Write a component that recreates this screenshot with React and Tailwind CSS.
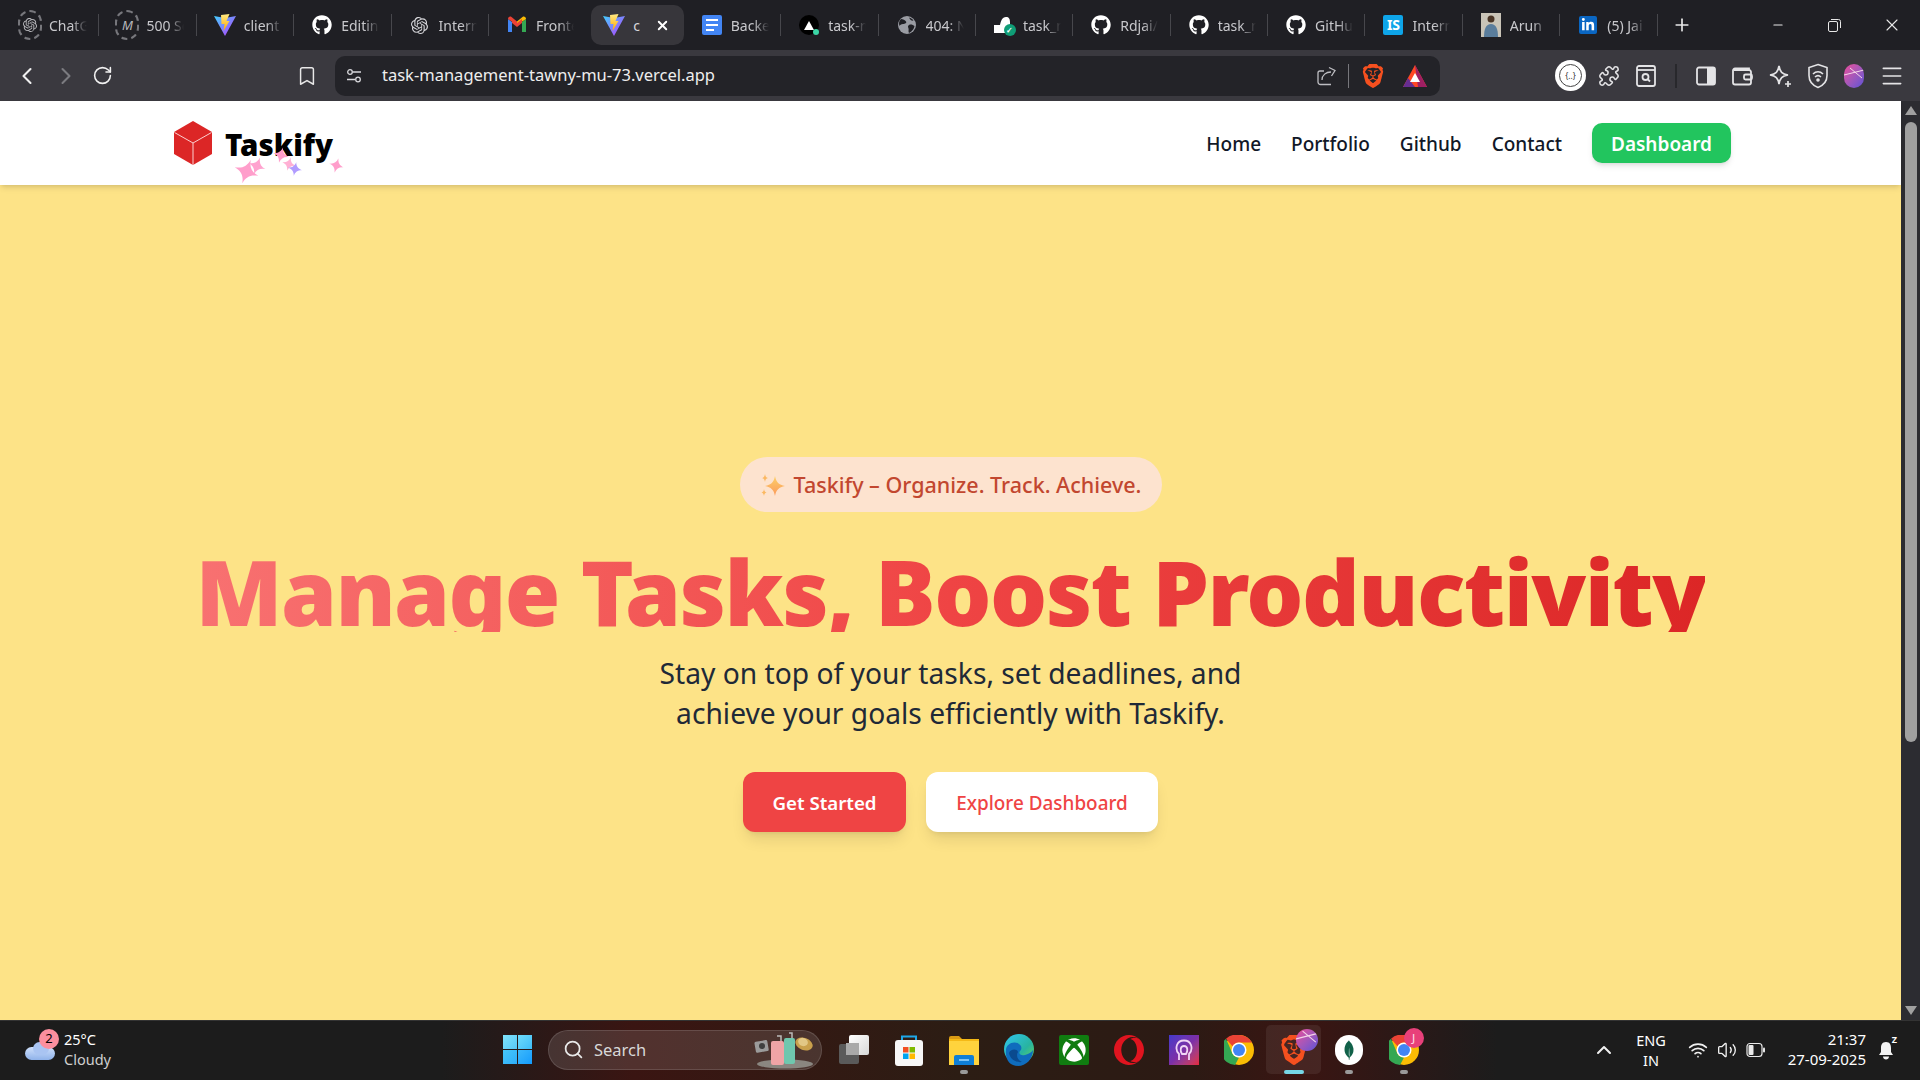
import React from "react";
import { FaGithub, FaLinkedinIn, FaXbox } from "react-icons/fa";
import { SiOpenai, SiBrave, SiMongodb, SiOpera } from "react-icons/si";
import { ChevronLeft, ChevronRight, RotateCw, Bookmark, Plus, X, Minus, Search, Puzzle, Wifi, Volume2, ChevronUp, Menu } from "lucide-react";

const Vite = ({ s = 24 }) => (
  <svg width={s} height={s} viewBox="0 0 24 24">
    <defs>
      <linearGradient id="vg" x1="0" y1="0" x2="1" y2="1"><stop offset="0" stopColor="#41d1ff" /><stop offset="1" stopColor="#bd34fe" /></linearGradient>
      <linearGradient id="vb" x1="0" y1="0" x2="0" y2="1"><stop offset="0" stopColor="#ffea83" /><stop offset="1" stopColor="#ffa800" /></linearGradient>
    </defs>
    <path d="M1 3 L12 5 L23 3 L12 23 Z" fill="url(#vg)" />
    <path d="M8 2 L16.5 1 L13.5 8 L16.5 8 L10.5 18 L11.5 11 L8.5 11 Z" fill="url(#vb)" />
  </svg>
);
const Gmail = () => (
  <svg width="20" height="18" viewBox="0 0 20 18">
    <path d="M1 16V3l4 3v10z" fill="#4285f4" /><path d="M19 16V3l-4 3v10z" fill="#34a853" />
    <path d="M1 3c0-2 2-3 3.500-2L10 5.500V9L1 3z" fill="#ea4335" /><path d="M19 3c0-2-2-3-3.500-2L10 5.500V9l9-6z" fill="#fbbc04" />
    <path d="M5 3l5 4 5-4v4l-5 4-5-4z" fill="#ea4335" />
  </svg>
);
const Docs = () => (
  <div className="flex h-5 w-5 flex-col justify-center gap-[3px] rounded-[2px] bg-[#4285f4] px-1">
    <div className="h-[2px] w-full bg-white" /><div className="h-[2px] w-full bg-white" /><div className="h-[2px] w-2/3 bg-white" />
  </div>
);
const VercelDot = () => (
  <div className="relative flex h-5 w-5 items-center justify-center rounded-full bg-black">
    <svg width="10" height="9" viewBox="0 0 10 9"><path d="M5 0l5 9H0z" fill="#fff" /></svg>
    <div className="absolute bottom-0 right-0 h-[6px] w-[6px] rounded-full bg-[#3bd6a5]" />
  </div>
);
const Render = () => (
  <div className="relative h-5 w-5">
    <svg width="20" height="20" viewBox="0 0 20 20"><path d="M0 10h6c1-4 2-8 6-8 3 0 4 2 4 5v11H0z" fill="#fff" /></svg>
    <div className="absolute -bottom-[1px] -right-[2px] flex h-3 w-3 items-center justify-center rounded-full bg-[#0f9d76] text-[8px] font-bold leading-none text-white">✓</div>
  </div>
);
const IS = () => <div className="flex h-5 w-5 items-center justify-center rounded-[2px] bg-[#0ea5e9] text-[14px] font-bold leading-none text-white">IS</div>;
const Arun = () => (
  <svg width="20" height="24" viewBox="0 0 20 24"><rect width="20" height="24" fill="#c9c4b8" /><circle cx="10" cy="6" r="3.500" fill="#4a3526" /><path d="M3 24c0-8 2-13 7-13s7 5 7 13z" fill="#5a7d9c" /></svg>
);
const Orbit = ({ children }) => (
  <div className="flex h-[30px] w-[24px] items-center justify-center rounded-full border-2 border-dashed border-[#77777c] text-[#b8b8bc]">{children}</div>
);
const GlobeSolid = () => (
  <svg width="18" height="18" viewBox="0 0 18 18">
    <circle cx="9" cy="9" r="9" fill="#9a9ca3" />
    <path d="M3 3c2 0 4 1 5 2.500S7 8 5 8 2 9 1.500 10C.5 7 1 5 3 3zM11 9c2-1 4 0 5.500 1-.5 3-2.500 5.500-5.500 7-1-2 0-3-.5-4.500S9.500 10 11 9zM11 1.500c2 .5 3.500 1.500 4.500 3-1.500.5-3 0-4.500-3z" fill="#1f1f24" />
  </svg>
);
const LinkedIn = () => <div className="flex h-[18px] w-[18px] items-center justify-center rounded-[2px] bg-[#0a66c2]"><FaLinkedinIn size={14} color="#fff" /></div>;

const tabs = [
  { icon: <Orbit><SiOpenai size={14} /></Orbit>, t: "ChatGPT" },
  { icon: <Orbit><span className="text-[13px] italic leading-none">M</span></Orbit>, t: "500 Server" },
  { icon: <Vite />, t: "client" },
  { icon: <FaGithub size={20} color="#fff" />, t: "Editing" },
  { icon: <SiOpenai size={17} color="#d8d8dc" />, t: "Internship" },
  { icon: <Gmail />, t: "Frontend" },
  { icon: <Vite />, t: "c", active: true },
  { icon: <Docs />, t: "Backend" },
  { icon: <VercelDot />, t: "task-m" },
  { icon: <GlobeSolid />, t: "404: Not" },
  { icon: <Render />, t: "task_m" },
  { icon: <FaGithub size={20} color="#fff" />, t: "Rdjai/" },
  { icon: <FaGithub size={20} color="#fff" />, t: "task_m" },
  { icon: <FaGithub size={20} color="#fff" />, t: "GitHub" },
  { icon: <IS />, t: "Intern" },
  { icon: <Arun />, t: "Arun" },
  { icon: <LinkedIn />, t: "(5) Jai" },
];

const Tab = ({ icon, t, active }) =>
  active ? (
    <div className="ml-[5px] flex h-10 w-[92.400px] shrink-0 items-center gap-[7px] rounded-[10px] bg-[#37363b] pl-[11px]">
      <div className="flex w-6 shrink-0 items-center justify-center">{icon}</div>
      <span className="w-[8px] overflow-hidden text-[14px] text-[#d8d8dc]">{t}</span>
      <X size={15} strokeWidth={3} color="#fff" className="ml-[7px]" />
    </div>
  ) : (
    <div className="flex h-10 w-[97.400px] shrink-0 items-center gap-[7px] pl-4">
      <div className="flex w-6 shrink-0 items-center justify-center">{icon}</div>
      <span className="w-[38px] overflow-hidden whitespace-nowrap text-[14px] text-[#c8c8cc] [mask-image:linear-gradient(to_right,black_60%,transparent)]">{t}</span>
    </div>
  );

const Sep = () => <div className="h-[22px] w-px shrink-0 bg-[#47474c]" />;

const Restore = () => (
  <svg width="13" height="14" viewBox="0 0 13 14" fill="none" stroke="#e8e8e8"><rect x="0.500" y="3.500" width="9" height="10" rx="1.500" /><path d="M3 1.500h7.500a2 2 0 0 1 2 2V10" /></svg>
);

const BAT = () => (
  <svg width="24" height="22" viewBox="0 0 24 22"><path d="M12 0L24 22H0z" fill="#ff4724" /><path d="M12 0L24 22H15z" fill="#9e1f63" /><path d="M0 22L5 13 12 22z" fill="#662d91" /><path d="M12 8l5 9H7z" fill="#fff" /></svg>
);
const BraveIcon = ({ s = 24 }) => <SiBrave size={s} color="#f5501f" />;

const tool = "#e4e4e6";
const SiteSettings = () => (
  <svg width="16" height="16" viewBox="0 0 16 16" fill="none" stroke="#d8d8dc" strokeWidth="1.300"><circle cx="4" cy="4" r="2.300" /><path d="M6.500 4H15M1 11.500h8" /><circle cx="12" cy="11.500" r="2.300" /></svg>
);
const ShareUp = () => (
  <svg width="20" height="20" viewBox="0 0 20 20" fill="none" stroke="#bdbdc2" strokeWidth="1.300"><path d="M7 5H3a2 2 0 0 0-2 2v9a2.500 2.500 0 0 0 2.500 2.500H14" /><path d="M5 14c0-5 4-8 9-8M12 1.500l6 3-3.500 5.500" /></svg>
);
const SidePanel = () => <svg width="22" height="22" viewBox="0 0 22 22" fill="none"><rect x="2" y="2.500" width="18" height="17" rx="2" stroke={tool} strokeWidth="1.800" /><rect x="12" y="2.500" width="8" height="17" fill={tool} /></svg>;
const Wallet = () => <svg width="22" height="22" viewBox="0 0 22 22" fill="none" stroke={tool} strokeWidth="1.800"><path d="M18 5V3.500H4A2 2 0 0 0 2 5.500v12a2 2 0 0 0 2 2h14a2 2 0 0 0 2-2V7a2 2 0 0 0-2-2H3" /><rect x="13" y="9.500" width="8" height="5" rx="1.500" /></svg>;
const Leo = () => <svg width="24" height="24" viewBox="0 0 24 24" fill="none" stroke={tool} strokeWidth="1.700"><path d="M11 2c1 6 3 8 9 9-6 1-8 3-9 9-1-6-3-8-9-9 6-1 8-3 9-9z" /><path d="M20 17v6M17 20h6" /></svg>;
const VpnShield = () => <svg width="22" height="26" viewBox="0 0 22 26" fill="none" stroke={tool} strokeWidth="1.600"><path d="M11 1.500l9 3v8c0 6-4 10-9 12-5-2-9-6-9-12v-8z" /><path d="M6 11c3-3 7-3 10 0M8 14c2-1.800 4-1.800 6 0" /><circle cx="11" cy="17" r="1" fill={tool} /></svg>;
const ReadBox = () => <svg width="22" height="24" viewBox="0 0 22 24" fill="none" stroke={tool} strokeWidth="1.800"><rect x="2" y="2" width="18" height="20" rx="2" /><path d="M2 6h18" /><circle cx="10.500" cy="13" r="3" /><path d="M13 15.500l2 2" /></svg>;
const Avatar = ({ s = 20, w = 20 }) => (
  <div className="relative overflow-hidden rounded-full bg-gradient-to-br from-[#ec4899] to-[#5b4fd6]" style={{ height: s, width: w }}>
    <svg className="absolute inset-0" width={w} height={s} viewBox="0 0 20 20" stroke="#f5d5e8" strokeWidth="1"><path d="M0 9l20-5M6 2l12 10" /></svg>
  </div>
);

const Spark = ({ s, c, className }) => (
  <svg width={s} height={s} viewBox="0 0 20 20" className={className}><path d="M10 0c1 6 4 9 10 10-6 1-9 4-10 10-1-6-4-9-10-10 6-1 9-4 10-10z" fill={c} /></svg>
);

const Logo = () => (
  <div className="relative flex items-center">
    <svg width="38" height="44" viewBox="0 0 38 44">
      <path d="M19 0L38 11V33L19 44L0 33V11Z" fill="#dc2626" />
      <path d="M0.500 11.500L19 22L37.500 11.500M19 22V44" fill="none" stroke="#fbd0d0" strokeWidth="1" />
    </svg>
    <span className="ml-[13px] pt-[3px] text-[29.500px] font-black leading-none text-black">Taskify</span>
    <Spark s={25} c="#ff9ecb" className="absolute left-[60px] top-[38px] rotate-[20deg]" />
    <Spark s={18} c="#ffa3cf" className="absolute left-[74px] top-[36px] rotate-[20deg]" />
    <Spark s={16} c="#ff9ecb" className="absolute left-[99px] top-[26px] rotate-[15deg]" />
    <Spark s={14} c="#ffb0d4" className="absolute left-[108px] top-[36px] rotate-[15deg]" />
    <Spark s={14} c="#b19cff" className="absolute left-[114px] top-[41px] rotate-[10deg]" />
    <Spark s={15} c="#ff9ecb" className="absolute left-[155px] top-[37px] rotate-[15deg]" />
  </div>
);

const NavLink = ({ children }) => <a className="pt-[2px] text-[19px] font-medium text-[#111827]">{children}</a>;

const WinLogo = () => (
  <div className="grid h-[29px] w-[29px] grid-cols-2 gap-px">
    <div className="bg-gradient-to-br from-[#7fe3fb] to-[#55c8f7]" /><div className="bg-gradient-to-br from-[#6fdcfb] to-[#3dbdf8]" />
    <div className="bg-gradient-to-br from-[#46c6f9] to-[#2eaefa]" /><div className="bg-gradient-to-br from-[#3cb9fb] to-[#119bfd]" />
  </div>
);
const Luggage = () => (
  <svg width="62" height="38" viewBox="0 0 62 38">
    <ellipse cx="32" cy="33" rx="28" ry="4.500" fill="#8a8680" />
    <rect x="2" y="10" width="13" height="11" rx="1.500" fill="#9b9b9b" transform="rotate(-10 8 15)" /><circle cx="9" cy="15" r="3" fill="#3f3f3f" />
    <path d="M24 5h4V12M36 2h3V8" stroke="#bbb" fill="none" strokeWidth="1.500" />
    <rect x="18" y="10" width="13" height="24" rx="2" fill="#efa4a6" />
    <rect x="31" y="7" width="11" height="26" rx="2" fill="#6fc7ae" />
    <ellipse cx="51" cy="13" rx="9" ry="6" fill="#c9a04c" transform="rotate(20 51 13)" /><ellipse cx="50" cy="11" rx="5" ry="4" fill="#e2c785" transform="rotate(20 50 11)" />
  </svg>
);
const TaskView = () => (
  <div className="relative h-[29px] w-[30px]">
    <div className="absolute bottom-0 left-0 h-5 w-5 rounded-[2px] bg-[#5a5a5a]" />
    <div className="absolute right-0 top-0 h-5 w-5 rounded-[2px] bg-gradient-to-br from-white to-[#d8d8d8]" />
    <div className="absolute bottom-[9px] left-[7px] h-3 w-[13px] bg-[#a9a9a9]" />
  </div>
);
const Store = () => (
  <svg width="30" height="32" viewBox="0 0 30 32">
    <path d="M8 7V2.500h14V7" fill="none" stroke="#1ea7e8" strokeWidth="2" />
    <rect x="1" y="6" width="28" height="26" rx="3" fill="#f7f7f7" />
    <rect x="9" y="13" width="5.500" height="5.500" fill="#f25022" /><rect x="15.500" y="13" width="5.500" height="5.500" fill="#7fba00" />
    <rect x="9" y="19.500" width="5.500" height="5.500" fill="#00a4ef" /><rect x="15.500" y="19.500" width="5.500" height="5.500" fill="#ffb900" />
  </svg>
);
const Explorer = () => (
  <svg width="30" height="30" viewBox="0 0 30 30">
    <path d="M0 3a2 2 0 0 1 2-2h8l3 3H0z" fill="#d99a14" /><rect y="4" width="30" height="26" fill="#ffd33d" />
    <rect y="4" width="30" height="2" fill="#f5b916" />
    <path d="M5 30V22a2 2 0 0 1 2-2h16a2 2 0 0 1 2 2v8z" fill="#0f7fd6" /><rect x="10" y="24" width="10" height="2" fill="#7cc4f5" />
  </svg>
);
const Edge = () => (
  <svg width="30" height="34" viewBox="0 0 30 34">
    <defs><linearGradient id="eg" x1="0" y1="0" x2="1" y2="1"><stop offset="0" stopColor="#30c5f0" /><stop offset=".6" stopColor="#28b4a0" /><stop offset="1" stopColor="#6fdc4f" /></linearGradient></defs>
    <circle cx="15" cy="16" r="15" fill="url(#eg)" />
    <path d="M2 17c0-6 8-10 13-6 3 2 3 5 1 7-2 3 1 5 5 4 3-1 6-2 8-5 0 9-7 16-15 16S1 27 2 17z" fill="#0f6cbd" />
    <path d="M14 19c-2 3-1 8 4 10-6 1-12-3-13-9 1-4 8-5 9-1z" fill="#0a4a8f" />
  </svg>
);
const Xbox = () => <div className="flex h-[30px] w-[30px] items-center justify-center rounded-[2px] bg-[#107c10]"><FaXbox size={24} color="#fff" /></div>;
const PurpleApp = () => (
  <div className="flex h-[30px] w-[30px] items-center justify-center bg-gradient-to-br from-[#4338ca] via-[#7c2fa8] to-[#e5263a]">
    <svg width="18" height="22" viewBox="0 0 18 22" fill="none" stroke="#f0d5f5" strokeWidth="1.800"><path d="M4 21v-6c-3-3-3-6-2-9 2-6 12-6 14 0 1 3 1 6-2 9v6" /><path d="M7 15c-2-3-2-8 2-8s4 5 2 8z" /></svg>
  </div>
);
const Chrome = ({ s = 30 }) => (
  <svg width={s} height={s} viewBox="0 0 30 30">
    <circle cx="15" cy="15" r="15" fill="#fbbc04" />
    <path d="M15 0A15 15 0 0 1 28 7.500H15A7.500 7.500 0 0 0 8.500 11.250L2 3.700A15 15 0 0 1 15 0Z" fill="#ea4335" />
    <path d="M2 3.700L8.500 18.750A7.500 7.500 0 0 0 15 22.500L11 30A15 15 0 0 1 2 3.700Z" fill="#34a853" />
    <circle cx="15" cy="15" r="7.500" fill="#fff" /><circle cx="15" cy="15" r="6" fill="#4285f4" />
  </svg>
);
const Mongo = () => (
  <div className="flex h-[30px] w-[28px] items-center justify-center rounded-full bg-white"><SiMongodb size={20} color="#116149" /></div>
);

const TaskApp = ({ children, dot, active }) => (
  <div className={`relative flex h-[49px] w-[55px] items-center justify-center ${active ? "rounded-[5px] bg-[#ffffff12]" : ""}`}>
    {children}
    {dot && <div className={`absolute bottom-0 left-1/2 h-1 -translate-x-1/2 rounded-full ${active ? "w-5 bg-[#76d6e6]" : "w-2 bg-[#9a9a9a]"}`} />}
  </div>
);

const Battery = () => (
  <svg width="20" height="16" viewBox="0 0 20 16" fill="none"><rect x="1" y="1.500" width="15" height="13" rx="3" stroke="#e8e8e8" strokeWidth="1.200" /><rect x="2.500" y="3" width="5" height="10" rx="1" fill="#e8e8e8" /><rect x="17" y="5.500" width="2" height="5" rx="1" fill="#e8e8e8" /></svg>
);
const Bell = () => (
  <div className="relative">
    <svg width="18" height="20" viewBox="0 0 18 20"><path d="M9 2c4 0 5 3 5 6v4l2 3H2l2-3V8c0-3 1-6 5-6z" fill="#f2f2f2" /><path d="M6 16.500h6c0 2-1.500 3-3 3s-3-1-3-3z" fill="#f2f2f2" /></svg>
    <span className="absolute -right-[2px] -top-[5px] text-[9px] font-bold leading-none text-white">Z</span>
  </div>
);

export default function App() {
  return (
    <div className="flex h-[1080px] w-[1920px] flex-col overflow-hidden bg-[#fde387] font-['Noto_Sans','Open_Sans',sans-serif]">
      {/* tab strip */}
      <div className="flex h-[50px] shrink-0 items-center bg-[#1f1f24] pl-[2px]">
        {tabs.map((tab, i) => (
          <React.Fragment key={i}>
            <Tab {...tab} />
            {i < tabs.length - 1 && !tab.active && !tabs[i + 1].active && <div className="-ml-px"><Sep /></div>}
          </React.Fragment>
        ))}
        <div className="-ml-px"><Sep /></div>
        <Plus size={20} color="#e8e8e8" strokeWidth={2} className="ml-[14px]" />
        <div className="ml-[79px] flex items-center gap-[43px]">
          <Minus size={14} color="#e8e8e8" />
          <Restore />
          <X size={20} color="#e8e8e8" strokeWidth={1.300} className="-ml-[2px]" />
        </div>
      </div>
      {/* toolbar */}
      <div className="flex h-[51px] shrink-0 items-center bg-[#3a393f]">
        <div className="ml-[13px] flex w-[322px] items-center">
          <ChevronLeft size={28} color="#f0f0f0" strokeWidth={1.800} />
          <ChevronRight size={28} color="#7b7b80" strokeWidth={1.800} className="ml-[11px]" />
          <RotateCw size={21} color="#f0f0f0" strokeWidth={1.800} className="ml-[12px]" />
          <Bookmark size={22} color="#e8e8e8" strokeWidth={1.600} className="ml-[183px]" />
        </div>
        <div className="flex h-10 w-[1105px] items-center rounded-[10px] bg-[#232328] pl-[11px]">
          <SiteSettings />
          <span className="ml-[20px] text-[16.500px] text-[#eeeeee]">task-management-tawny-mu-73.vercel.app</span>
          <div className="ml-auto flex items-center">
            <ShareUp />
            <div className="ml-[11px] h-6 w-px bg-[#77777c]" />
            <div className="ml-[12px]"><BraveIcon /></div>
            <div className="ml-[18px] mr-[13px]"><BAT /></div>
          </div>
        </div>
        <div className="ml-[115px] flex items-center">
          <div className="flex h-[31px] w-[31px] items-center justify-center rounded-full bg-white">
            <div className="flex h-[23px] w-[23px] items-center justify-center rounded-full border border-[#444] text-[8px] leading-none text-[#333]">{"{..}"}</div>
          </div>
          <Puzzle size={22} color={tool} strokeWidth={1.700} className="ml-[12px]" />
          <div className="ml-[15px]"><ReadBox /></div>
          <div className="ml-[18px] h-6 w-[2px] bg-[#28282c]" />
          <div className="ml-[18px]"><SidePanel /></div>
          <div className="ml-[14px]"><Wallet /></div>
          <div className="ml-[15px]"><Leo /></div>
          <div className="ml-[15px]"><VpnShield /></div>
          <div className="ml-[15px]"><Avatar s={24} w={20} /></div>
          <Menu size={26} color={tool} strokeWidth={1.500} className="ml-[15px]" />
        </div>
      </div>
      {/* page */}
      <div className="flex min-h-0 flex-1">
        <div className="flex min-w-0 flex-1 flex-col">
          <nav className="relative z-10 flex h-[84px] shrink-0 items-center justify-between bg-white pl-[174px] pr-[170px] shadow-md">
            <Logo />
            <div className="flex items-center gap-[30px]">
              <NavLink>Home</NavLink>
              <NavLink>Portfolio</NavLink>
              <NavLink>Github</NavLink>
              <NavLink>Contact</NavLink>
              <a className="flex h-10 w-[139px] items-center justify-center rounded-[10px] bg-[#22c55e] pt-[2px] text-[19px] font-semibold text-white shadow-md">Dashboard</a>
            </div>
          </nav>
          <main className="flex flex-1 flex-col items-center justify-center pt-[84px]">
            <div className="flex h-[55px] w-[422px] items-center justify-center gap-2 rounded-full bg-[#fde3cf] pt-[2px] text-[21.500px] font-medium text-[#c2472f]">
              <svg width="26" height="26" viewBox="0 0 26 26">
                <defs><linearGradient id="sp" x1="0" y1="0" x2="0" y2="1"><stop offset="0" stopColor="#fdd068" /><stop offset="1" stopColor="#fb9a5b" /></linearGradient></defs>
                <path d="M15 3c1 6 4 9 10 10-6 1-9 4-10 10-1-6-4-9-10-10 6-1 9-4 10-10z" fill="url(#sp)" />
                <path d="M5 1c.4 2.500 1 3.500 3 4-2 .5-2.600 1.500-3 4-.4-2.500-1-3.500-3-4 2-.5 2.600-1.500 3-4zM4 16c.3 2 .8 3 2.500 3.500C4.800 20 4.300 21 4 23c-.3-2-.8-3-2.500-3.500C3.200 19 3.700 18 4 16z" fill="#fbb861" />
              </svg>
              <span>Taskify – Organize. Track. Achieve.</span>
            </div>
            <h1 className="mt-[32px] h-[88px] whitespace-nowrap bg-gradient-to-r from-[#f87171] via-[#ef4444] to-[#dc2626] bg-clip-text text-[90px] font-black leading-[94px] tracking-[-1.600px] text-transparent">Manage Tasks, Boost Productivity</h1>
            <p className="mt-[21px] text-center text-[28.200px] leading-[40px] text-[#1f2937]">Stay on top of your tasks, set deadlines, and<br />achieve your goals efficiently with Taskify.</p>
            <div className="mt-[39px] flex gap-5">
              <a className="flex h-[60px] w-[163px] items-center justify-center rounded-xl bg-[#ef4444] pt-[2px] text-[18.700px] font-semibold text-white shadow-lg">Get Started</a>
              <a className="flex h-[60px] w-[232px] items-center justify-center rounded-xl bg-white pt-[2px] text-[18.900px] font-medium text-[#ef4444] shadow-lg">Explore Dashboard</a>
            </div>
          </main>
        </div>
        {/* scrollbar */}
        <div className="flex w-[19px] shrink-0 flex-col items-center bg-[#2c2c31] py-[5px]">
          <div className="h-0 w-0 border-x-[6px] border-b-[9px] border-x-transparent border-b-[#a0a0a0]" />
          <div className="mt-[7px] h-[620px] w-[12px] rounded-full bg-[#a0a0a0]" />
          <div className="mt-auto h-0 w-0 border-x-[6px] border-t-[9px] border-x-transparent border-t-[#a0a0a0]" />
        </div>
      </div>
      {/* taskbar */}
      <div className="flex h-[60px] shrink-0 items-center border-t border-t-[#333] bg-[linear-gradient(to_right,#1c1c1c_23%,#3a1512_33%,#2c1d14_50%,#2c1a14_62%,#3a1512_68%,#1c1c1c_78%)] pb-[2px]">
        <div className="flex w-[503px] shrink-0 items-center pl-[25px]">
          <div className="relative h-[20px] w-[30px]">
            <div className="absolute bottom-0 left-0 h-[13px] w-[30px] rounded-full bg-gradient-to-b from-[#cfe0fb] to-[#8fb2ea]" />
            <div className="absolute bottom-[5px] left-[8px] h-[13px] w-[16px] rounded-full bg-[#a9c4f2]" />
            <div className="absolute -top-[11px] left-[14px] flex h-5 w-5 items-center justify-center rounded-full bg-[#fb8f9e] text-[13px] leading-none text-black">2</div>
          </div>
          <div className="ml-[9px] -mt-[1px] flex flex-col text-[14.500px] leading-[20px]">
            <span className="text-white">25°C</span>
            <span className="text-[#cfcfcf]">Cloudy</span>
          </div>
        </div>
        <WinLogo />
        <div className="ml-[16px] flex h-10 w-[274px] shrink-0 items-center overflow-hidden rounded-full border border-[#ffffff22] bg-[#ffffff1f] pl-[14px] pr-[6px]">
          <Search size={21} color="#e8e8e8" strokeWidth={2} />
          <span className="ml-[10px] pt-[2px] text-[16.500px] text-[#d8d8d8]">Search</span>
          <div className="ml-auto"><Luggage /></div>
        </div>
        <div className="ml-[4px] flex items-center">
          <TaskApp><TaskView /></TaskApp>
          <TaskApp><Store /></TaskApp>
          <TaskApp dot><Explorer /></TaskApp>
          <TaskApp><Edge /></TaskApp>
          <TaskApp><Xbox /></TaskApp>
          <TaskApp><SiOpera size={30} color="#e0141f" /></TaskApp>
          <TaskApp><PurpleApp /></TaskApp>
          <TaskApp><Chrome /></TaskApp>
          <TaskApp dot active>
            <div className="relative"><BraveIcon s={30} /><div className="absolute -right-[9px] -top-[6px]"><Avatar s={22} w={22} /></div></div>
          </TaskApp>
          <TaskApp dot><Mongo /></TaskApp>
          <TaskApp dot>
            <div className="relative"><Chrome /><div className="absolute -right-[5px] -top-[7px] flex h-5 w-5 items-center justify-center rounded-full bg-[#e8407a] text-[11px] font-medium leading-none text-[#fbd5e0]">J</div></div>
          </TaskApp>
        </div>
        <ChevronUp size={24} color="#f0f0f0" className="ml-[161px]" />
        <div className="ml-[11px] flex w-[48px] shrink-0 flex-col items-center text-[14.500px] leading-[20px] text-white"><span>ENG</span><span>IN</span></div>
        <div className="ml-[13px] flex items-center gap-[9px]">
          <Wifi size={20} color="#f0f0f0" />
          <Volume2 size={20} color="#f0f0f0" strokeWidth={1.600} />
          <Battery />
        </div>
        <div className="-mt-[2px] ml-auto flex flex-col items-end text-[15px] leading-[20px] text-white"><span>21:37</span><span>27-09-2025</span></div>
        <div className="ml-[11px] mr-[25px]"><Bell /></div>
      </div>
    </div>
  );
}
